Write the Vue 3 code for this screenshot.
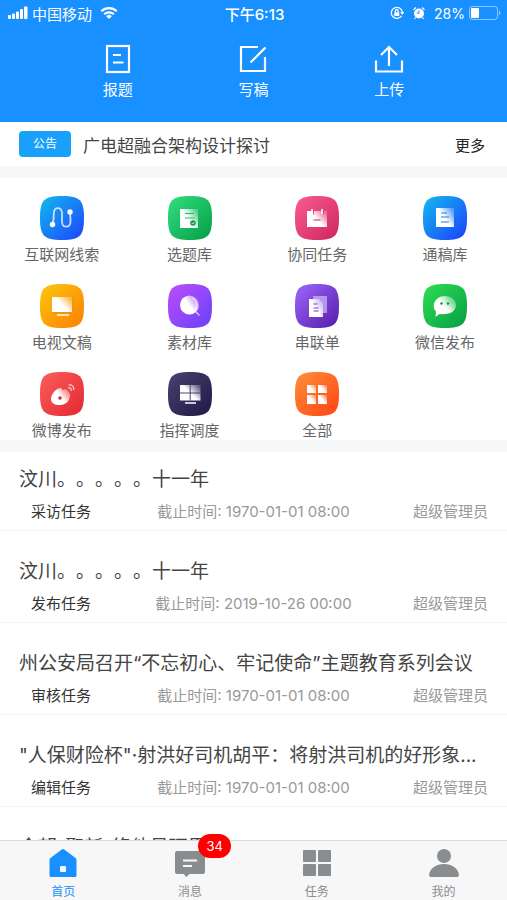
<template>
  <div class="home-page">
    <header class="top">
      <div class="status-bar">
        <div class="status-left">
          <svg class="signal" viewBox="0 0 20 14">
            <rect x="0" y="9" width="3" height="4" rx="1" />
            <rect x="4" y="7.500" width="3" height="5.500" rx="1" />
            <rect x="8" y="5.500" width="3" height="7.500" rx="1" />
            <rect x="12" y="3" width="3" height="10" rx="1" />
            <rect x="16" y="0.500" width="3.500" height="12.500" rx="1" />
          </svg>
          <span>中国移动</span>
          <svg class="wifi" viewBox="0 0 18 14">
            <path d="M1.300 5.300a11 11 0 0 1 15.400 0M4.200 8.300a6.900 6.900 0 0 1 9.600 0" />
            <path class="solid" d="M6.200 10.200a4 4 0 0 1 5.600 0L9 13z" />
          </svg>
        </div>
        <span class="clock">下午6:13</span>
        <div class="status-right">
          <svg class="small-icon" viewBox="0 0 14 14">
            <path class="line" d="M11.500 9.800A5.500 5.500 0 1 1 12.300 6" />
            <path d="M10.200 6h4L12.200 9z" />
            <rect x="4.300" y="6.300" width="5" height="3.800" rx="0.500" />
            <path class="line" d="M5.400 6.500V5a1.400 1.400 0 0 1 2.800 0v1.500" />
          </svg>
          <svg class="small-icon alarm" viewBox="0 0 14 14">
            <circle cx="7" cy="7.500" r="5" />
            <path class="line" d="M1.500 3.700 4 1.600M12.500 3.700 10 1.600M3.500 11.500l-1 1.500M10.500 11.500l1 1.500" />
            <path class="hands" d="M7 4.500v3L4.800 6.800" />
          </svg>
          <span>28%</span>
          <svg class="battery" viewBox="0 0 32 14">
            <rect class="shell" x="0.500" y="0.500" width="28" height="13" rx="3" />
            <rect x="2" y="2" width="8" height="10" rx="1" />
            <path class="tip" d="M30 4.500q3 2.500 0 5z" />
          </svg>
        </div>
      </div>
      <nav class="actions">
        <button class="action" type="button">
          <svg viewBox="0 0 30 30">
            <rect x="4" y="2" width="22" height="26" />
            <path d="M10 11h8M10 18.500H20.500" />
          </svg>
          <span>报题</span>
        </button>
        <button class="action" type="button">
          <svg viewBox="0 0 30 30">
            <path d="M20 3H3v24h24V13M12.500 18.500 27.500 3.500" />
          </svg>
          <span>写稿</span>
        </button>
        <button class="action" type="button">
          <svg viewBox="0 0 30 30">
            <path d="M2 16.500V27.500h26V16.500M15 22V3M7 11l8-8 8 8" />
          </svg>
          <span>上传</span>
        </button>
      </nav>
    </header>

    <main class="content">
      <section class="notice">
        <span class="notice-tag">公告</span>
        <span class="notice-title">广电超融合架构设计探讨</span>
        <a class="more" href="#">更多</a>
      </section>

      <section class="apps">
        <button v-for="app in apps" :key="app.id" class="app" type="button">
          <svg class="app-icon" viewBox="0 0 44 44">
            <defs>
              <linearGradient :id="'bg-' + app.id" x1="0" y1="0" x2="1" y2="1">
                <stop offset="0.050" :stop-color="app.from" />
                <stop offset="0.950" :stop-color="app.to" />
              </linearGradient>
              <linearGradient :id="'fg-' + app.id" x1="0.200" y1="0.800" x2="1" y2="0.200">
                <stop offset="0.400" stop-color="#fff" />
                <stop offset="1" stop-color="#fff" stop-opacity="0.250" />
              </linearGradient>
            </defs>
            <path
              d="M22 0C40 0 44 4 44 22S40 44 22 44 0 40 0 22 4 0 22 0z"
              :fill="`url(#bg-${app.id})`"
            />
            <g v-if="app.id === 'clue'" fill="none" stroke="#fff" stroke-width="1.800">
              <path d="M12.500 28C14 25 13.500 21 13.800 17c.4-6.500 7.800-6.500 8.200 0v9c.4 6.500 8.200 6 8.500 0 .2-3-.5-7-.5-10" stroke-opacity="0.750" />
              <circle cx="12.500" cy="28.500" r="1.800" fill="#fff" />
              <circle cx="30" cy="16" r="1.800" fill="#fff" />
            </g>
            <g v-else-if="app.id === 'topic'">
              <path d="M12 13h18v19H12z" :fill="`url(#fg-${app.id})`" />
              <path d="M17 17.500h9M17 22h10" stroke="#27b866" />
              <circle cx="25" cy="27" r="2.800" fill="#119a4b" />
              <path d="m23.700 27 1 1 1.700-2" fill="none" stroke="#fff" stroke-width="0.800" />
            </g>
            <g v-else-if="app.id === 'team'">
              <path d="M12 15h20v16H12z" :fill="`url(#fg-${app.id})`" />
              <path d="M17 13v5M27 13v5" stroke="#fff" stroke-width="1.500" />
              <path d="M18.500 18.500v-5M28.500 18.500v-5" stroke="#e4487c" />
              <path d="M18.500 24h7" stroke="#c52d60" />
            </g>
            <g v-else-if="app.id === 'common'">
              <path d="M13 12h18v19H13z" :fill="`url(#fg-${app.id})`" />
              <path d="M18 17h6M18 21h8M18 26h8" stroke="#247edd" stroke-width="1.200" />
            </g>
            <g v-else-if="app.id === 'tv'">
              <path d="M12 13h20v15H12z" :fill="`url(#fg-${app.id})`" />
              <path d="M33 13v16H12" fill="none" stroke="#ed8e10" />
              <path d="M17 31h12" stroke="#fff" stroke-width="1.500" />
            </g>
            <g v-else-if="app.id === 'material'">
              <circle cx="21.500" cy="21" r="9.500" :fill="`url(#fg-${app.id})`" />
              <path d="M24 14c6 2 6 10 2 13M27.500 27.500l4 4" fill="none" stroke="#fff" stroke-opacity="0.700" stroke-width="1.300" />
            </g>
            <g v-else-if="app.id === 'rundown'">
              <path d="M18 12h14v17H18z" fill="#d2b9f4" fill-opacity="0.700" />
              <path d="M14 15h10l4 4v14H14z" :fill="`url(#fg-${app.id})`" />
              <path d="M18.500 20h4M18.500 24h5M18.500 27h5" stroke="#7439ca" />
            </g>
            <g v-else-if="app.id === 'wechat'">
              <path d="M22 12c6.500 0 11 4 11 9s-4.500 9-11 9l-6 .2L12.500 33l.5-5.500C7.500 21 13 12 22 12z" :fill="`url(#fg-${app.id})`" />
              <circle cx="18.500" cy="19.500" r="1.300" fill="#16983f" />
              <circle cx="25" cy="19.500" r="1.300" fill="#16983f" />
            </g>
            <g v-else-if="app.id === 'weibo'">
              <path d="M11 27c0-6 7-12 10-11 1.500.5 1 2 1 2.500 3-2 6-1.500 6 1 3 1 2.500 5 1 8-2 7-18 8-18-.5z" :fill="`url(#fg-${app.id})`" />
              <circle cx="20" cy="26" r="1.800" fill="#c92f3b" />
              <path d="M28 16c2-1 4 1 3 3M28.500 13c3.500-.8 6 2 5 5" fill="none" stroke="#fff" stroke-opacity="0.750" stroke-width="1.200" />
            </g>
            <g v-else-if="app.id === 'command'">
              <path d="M12 13h20.500v15.500H12z" :fill="`url(#fg-${app.id})`" />
              <path d="M22.200 13v15.500M12 21h20.500" stroke="#3a3460" stroke-width="0.900" />
              <path d="M17 31h11" stroke="#fff" stroke-width="1.500" />
            </g>
            <g v-else>
              <path
                v-for="d in ['M12 13h9v8h-9z', 'M23 13h9v8h-9z', 'M12 23h9v9h-9z', 'M23 23h9v9h-9z']"
                :key="d"
                :d="d"
                :fill="`url(#fg-${app.id})`"
              />
            </g>
          </svg>
          <span class="app-name">{{ app.name }}</span>
        </button>
      </section>

      <ul class="tasks">
        <li v-for="(task, i) in tasks" :key="i" class="task">
          <h3>{{ task.title }}</h3>
          <div v-if="task.type" class="task-meta">
            <span class="task-type">{{ task.type }}</span>
            <span class="task-time">截止时间: {{ task.deadline }}</span>
            <span class="task-user">超级管理员</span>
          </div>
        </li>
      </ul>
    </main>

    <nav class="tab-bar">
      <button class="tab active" type="button">
        <svg viewBox="0 0 30 28">
          <path fill-rule="evenodd" d="M15 0q.7 0 1.300.5L27.500 9q1 .7 1 2v15.500q0 1.500-1.500 1.500H3q-1.500 0-1.500-1.500V11q0-1.300 1-2L13.700.5Q14.300 0 15 0zM13 17q-1 0-1 1v4q0 1 1 1h4q1 0 1-1v-4q0-1-1-1z" />
        </svg>
        <span>首页</span>
      </button>
      <button class="tab" type="button">
        <span class="tab-icon">
          <svg viewBox="0 0 30 28">
            <path d="M2 2h26q2 0 2 2v19q0 2-2 2H14.500L11.500 28l-3-3H2q-2 0-2-2V4q0-2 2-2z" />
            <path class="cut" d="M8 11.500h14M8 17h9" />
          </svg>
          <span class="count">34</span>
        </span>
        <span>消息</span>
      </button>
      <button class="tab" type="button">
        <svg viewBox="0 0 30 28">
          <rect x="1" y="1" width="13" height="12" rx="1" />
          <rect x="16" y="1" width="13" height="12" rx="1" />
          <rect x="1" y="15" width="13" height="12" rx="1" />
          <rect x="16" y="15" width="13" height="12" rx="1" />
        </svg>
        <span>任务</span>
      </button>
      <button class="tab" type="button">
        <svg viewBox="0 0 30 28">
          <circle cx="15" cy="7" r="7" />
          <path d="M0 26c1-7 7-11 15-11s14 4 15 11q0 2-2 2H2q-2 0-2-2z" />
        </svg>
        <span>我的</span>
      </button>
    </nav>
  </div>
</template>

<script setup>
const apps = [
  { id: 'clue', name: '互联网线索', from: '#12b4ee', to: '#1d49fb' },
  { id: 'topic', name: '选题库', from: '#30dc7c', to: '#08a04a' },
  { id: 'team', name: '协同任务', from: '#f75a8c', to: '#cf2862' },
  { id: 'common', name: '通稿库', from: '#14b4ee', to: '#1c46fb' },
  { id: 'tv', name: '电视文稿', from: '#fcc30c', to: '#fd8204' },
  { id: 'material', name: '素材库', from: '#b94cfb', to: '#6c42f8' },
  { id: 'rundown', name: '串联单', from: '#9a62f8', to: '#5720ae' },
  { id: 'wechat', name: '微信发布', from: '#2cdc52', to: '#08a044' },
  { id: 'weibo', name: '微博发布', from: '#fb5b59', to: '#e22b34' },
  { id: 'command', name: '指挥调度', from: '#47406f', to: '#211b48' },
  { id: 'all', name: '全部', from: '#ff8c3a', to: '#ff4614' }
]

const tasks = [
  { title: '汶川。。。。。十一年', type: '采访任务', deadline: '1970-01-01 08:00' },
  { title: '汶川。。。。。十一年', type: '发布任务', deadline: '2019-10-26 00:00' },
  { title: '州公安局召开“不忘初心、牢记使命”主题教育系列会议', type: '审核任务', deadline: '1970-01-01 08:00' },
  { title: '"人保财险杯"·射洪好司机胡平：将射洪司机的好形象...', type: '编辑任务', deadline: '1970-01-01 08:00' },
  { title: '今朝“聚新”络他見环里' }
]
</script>

<style>
body {
  margin: 0;
}
</style>

<style scoped>
.home-page {
  display: flex;
  flex-direction: column;
  height: 100vh;
  overflow: hidden;
  background: #fff;
  color: #444;
  font-family: Inter, "Noto Sans CJK SC", sans-serif;
  font-size: 15px;
  text-spacing-trim: space-all;
}

button {
  padding: 0;
  border: none;
  background: none;
  color: inherit;
  font: inherit;
  cursor: pointer;
}

svg {
  display: block;
}

/* Header */
.top {
  flex-shrink: 0;
  background: #1890ff;
  color: #fff;
}

.status-bar {
  display: grid;
  grid-template-columns: 1fr auto 1fr;
  align-items: center;
  height: 26px;
  padding: 0 6px 0 8px;
}

.status-left,
.status-right {
  display: flex;
  align-items: center;
  gap: 4px;
}

.status-right {
  justify-content: flex-end;
  font-size: 14px;
}

.status-bar svg {
  fill: #fff;
}

.clock {
  font-weight: 500;
}

.signal {
  width: 20px;
  height: 14px;
}

.wifi {
  width: 18px;
  height: 14px;
  margin-left: 4px;
}

.wifi path {
  fill: none;
  stroke: #fff;
  stroke-width: 2.2;
}

.wifi .solid {
  fill: #fff;
  stroke: none;
}

.small-icon {
  width: 14px;
  height: 14px;
}

.alarm {
  margin: 0 4px;
}

.line {
  fill: none;
  stroke: #fff;
  stroke-width: 1.3;
}

.hands {
  fill: none;
  stroke: #1890ff;
}

.battery {
  width: 32px;
  height: 14px;
}

.battery .shell {
  fill: none;
  stroke: #fff;
  stroke-opacity: 0.5;
}

.battery .tip {
  fill-opacity: 0.5;
}

.actions {
  display: grid;
  grid-template-columns: repeat(3, 1fr);
  padding: 18px 50px 21px;
}

.action {
  display: flex;
  flex-direction: column;
  align-items: center;
  gap: 5px;
  line-height: 22px;
}

.action svg {
  width: 30px;
  height: 30px;
  fill: none;
  stroke: #fff;
  stroke-width: 2.2;
}

/* Content */
.content {
  flex: 1;
  min-height: 0;
  overflow-y: auto;
  scrollbar-width: none;
}

.notice {
  display: flex;
  align-items: center;
  height: 44px;
  padding: 0 22px 0 19px;
  border-bottom: 12px solid #f5f7f9;
}

.notice-tag {
  width: 52px;
  margin-right: 12px;
  border-radius: 4px;
  background: #18a0fb;
  color: #fff;
  font-size: 12px;
  line-height: 26px;
  text-align: center;
}

.notice-title {
  flex: 1;
  font-size: 17px;
}

.more {
  color: #222;
  text-decoration: none;
}

.apps {
  display: grid;
  grid-template-columns: repeat(4, 1fr);
  row-gap: 20px;
  margin: 0 -2px;
  padding-top: 18px;
  border-bottom: 12px solid #f5f7f9;
}

.app {
  display: flex;
  flex-direction: column;
  align-items: center;
  gap: 6px;
}

.app-icon {
  width: 44px;
  height: 44px;
}

.app-name {
  color: #666;
  line-height: 18px;
}

/* Tasks */
.tasks {
  margin: 0;
  padding: 0;
  list-style: none;
}

.task {
  padding: 28px 19px 7px;
  border-bottom: 1px solid #f4f4f4;
}

.task:first-child {
  padding-top: 15px;
}

.task h3 {
  margin: 0 0 8px;
  overflow: hidden;
  font-size: 19px;
  font-weight: 400;
  line-height: 26px;
  text-overflow: ellipsis;
  white-space: nowrap;
}

.task-meta {
  display: grid;
  grid-template-columns: 1fr auto 1fr;
  color: #999;
  line-height: 22px;
}

.task-type {
  padding-left: 12px;
  color: #333;
}

.task-user {
  text-align: right;
}

/* Tab bar */
.tab-bar {
  display: grid;
  grid-template-columns: repeat(4, 1fr);
  flex-shrink: 0;
  box-sizing: border-box;
  height: 60px;
  border-top: 1px solid #dcdcdc;
  background: #f7f7f7;
}

.tab {
  display: flex;
  flex-direction: column;
  align-items: center;
  gap: 7px;
  padding-top: 8px;
  color: #8a8d90;
  font-size: 12px;
  line-height: 16px;
}

.tab svg {
  width: 30px;
  height: 28px;
  fill: currentColor;
}

.tab.active {
  color: #1890ff;
}

.tab-icon {
  position: relative;
}

.cut {
  fill: none;
  stroke: #f7f7f7;
  stroke-width: 2;
}

.count {
  position: absolute;
  top: -15px;
  left: 23px;
  width: 33px;
  border-radius: 12px;
  background: #f00;
  color: #fff;
  font-size: 13px;
  line-height: 24px;
  text-align: center;
}
</style>
